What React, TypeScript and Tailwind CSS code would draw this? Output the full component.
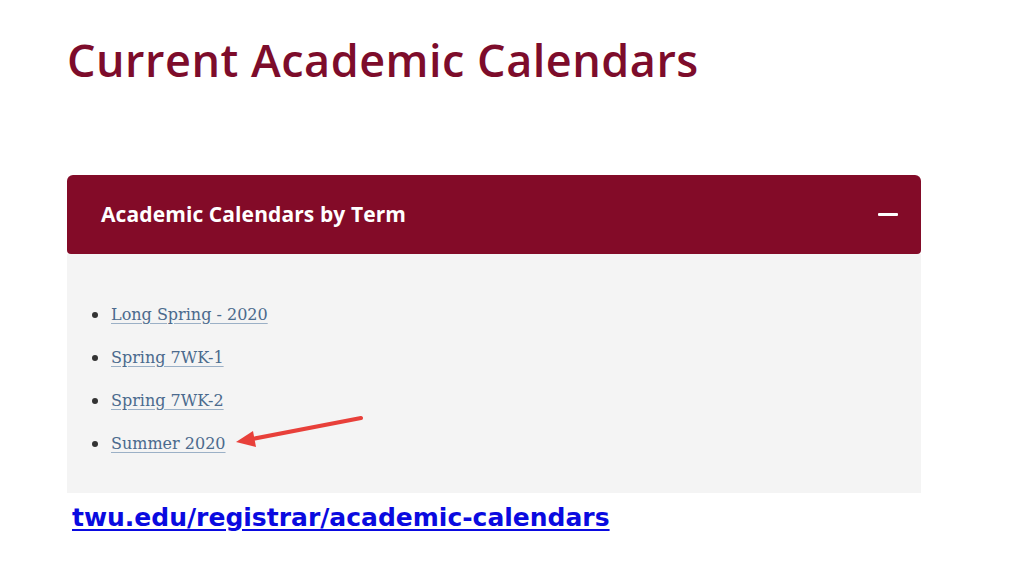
import React from "react";

const items = ["Long Spring - 2020", "Spring 7WK-1", "Spring 7WK-2", "Summer 2020"];

export default function App() {
  return (
    <div className="w-[1024px] h-[576px] bg-white overflow-hidden relative">
      <div className="pl-[67px] pt-[34px]">
        <h1
          className="text-[45px] leading-[52px] text-[#7d0c2b] font-semibold tracking-[0.5px]"
          style={{ fontFamily: "'Open Sans', sans-serif" }}
        >
          Current Academic Calendars
        </h1>
        <div className="mt-[89px] w-[854px]">
          <div className="h-[79px] bg-[#830b28] rounded-t-[6px] rounded-b-[4px] flex items-center justify-between pl-[34px] pr-[23px]">
            <span
              className="text-white text-[21px] font-bold tracking-[0.1px]"
              style={{ fontFamily: "'Open Sans', sans-serif" }}
            >
              Academic Calendars by Term
            </span>
            <span className="block w-[20px] h-[3px] bg-white rounded-[1px]" />
          </div>
          <div className="h-[239px] bg-[#f4f4f4] pt-[48px] pl-[25px] relative">
            <ul className="flex flex-col gap-[18px]">
              {items.map((t) => (
                <li key={t} className="flex items-center h-[25px]">
                  <span className="w-[6px] h-[6px] rounded-full bg-[#333] mr-[13px]" />
                  <a
                    className="text-[#4b6a8d] underline decoration-[#9bb0c6] underline-offset-[3px]"
                    style={{ fontFamily: "'DejaVu Serif', serif", fontSize: "16px" }}
                  >
                    {t}
                  </a>
                </li>
              ))}
            </ul>
            <svg className="absolute left-[160px] top-[155px]" width="150" height="45" viewBox="0 0 150 45">
              <line x1="134" y1="9" x2="20" y2="31" stroke="#e8403a" strokeWidth="4" strokeLinecap="round" />
              <polygon points="9,33 26,22 29,38" fill="#e8403a" />
            </svg>
          </div>
        </div>
        <a
          className="block mt-[10px] ml-[5px] text-[25px] leading-[30px] text-[#0a0ae0] underline underline-offset-[3px] font-semibold"
          style={{ fontFamily: "'DejaVu Sans', sans-serif" }}
        >
          twu.edu/registrar/academic-calendars
        </a>
      </div>
    </div>
  );
}
